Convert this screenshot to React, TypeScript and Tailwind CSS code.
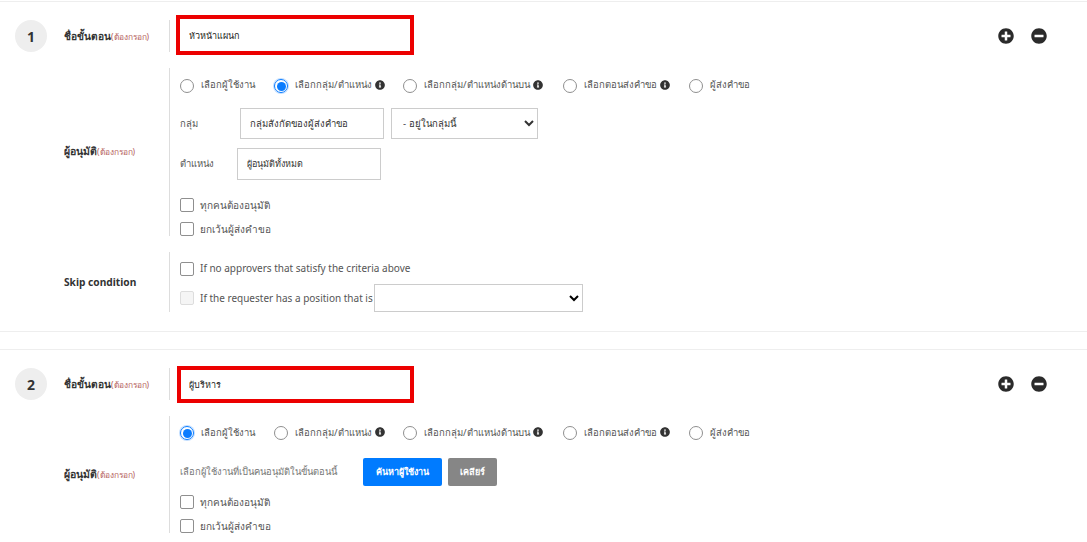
import React from 'react';
import { FaInfoCircle, FaMinusCircle, FaPlusCircle } from 'react-icons/fa';

const font = "font-['Noto_Sans','Open_Sans','DejaVu_Sans',sans-serif]";

function Required() {
    return <span className="text-[8.4px] font-normal text-[#b5605a]">(ต้องกรอก)</span>;
}

function Radio({ label, checked, info, width, lifted }: { label: string; checked?: boolean; info?: boolean; width: string; lifted?: boolean }) {
    return (
        <label className={`flex items-center ${width}`}>
            {checked ? (
                <span className="flex h-[14px] w-[14px] shrink-0 items-center justify-center rounded-full border border-[#0a7cff] shadow-[0_0_0_1px_rgba(10,124,255,0.25)]">
                    <span className="h-[9px] w-[9px] rounded-full bg-[#0a7cff]" />
                </span>
            ) : (
                <span className="h-[14px] w-[14px] shrink-0 rounded-full border border-[#8f8f8f]" />
            )}
            <span className={`ml-[7px] whitespace-nowrap text-[9.5px] text-[#555] ${lifted ? 'pb-px' : 'pt-px'}`}>{label}</span>
            {info && <FaInfoCircle className="mb-[2px] ml-[3px] shrink-0 text-[10px] text-[#333]" />}
        </label>
    );
}

function Check({ label, disabled, lifted }: { label: string; disabled?: boolean; lifted?: boolean }) {
    return (
        <label className="flex h-[14px] items-center">
            <span className={`h-[14px] w-[14px] shrink-0 rounded-[2px] border ${disabled ? 'border-[#ddd] bg-[#f5f5f5]' : 'border-[#8f8f8f]'}`} />
            <span className={`ml-[6px] whitespace-nowrap text-[10px] leading-[14px] text-[#555] ${lifted ? 'pb-[3px]' : 'pb-px'}`}>{label}</span>
        </label>
    );
}

function RadioRow({ first, height, lifted }: { first: number; height: string; lifted?: boolean }) {
    return (
        <div className={`flex items-center pl-[10px] ${height}`}>
            <Radio lifted={lifted} label="เลือกผู้ใช้งาน" checked={first === 0} width="w-[94px]" />
            <Radio lifted={lifted} label="เลือกกลุ่ม/ตำแหน่ง" checked={first === 1} info width="w-[129px]" />
            <Radio lifted={lifted} label="เลือกกลุ่ม/ตำแหน่งด้านบน" info width="w-[160px]" />
            <Radio lifted={lifted} label="เลือกตอนส่งคำขอ" info width="w-[126px]" />
            <Radio lifted={lifted} label="ผู้ส่งคำขอ" width="w-[80px]" />
        </div>
    );
}

function StepHeader({ no, name, boxClass }: { no: number; name: string; boxClass: string }) {
    return (
        <div className="flex h-[32px] items-center">
            <div className="ml-[15px] flex h-[32px] w-[32px] items-center justify-center rounded-full bg-[#eeeeee] text-[14px] font-bold text-[#333]">
                {no}
            </div>
            <div className="ml-[17px] w-[105px] pt-px text-[10.2px] font-bold text-[#333]">
                ชื่อขั้นตอน<Required />
            </div>
            <div className="h-[32px] border-l border-[#ddd] pl-[6px]">
                <input
                    readOnly
                    value={name}
                    className={`block border-4 border-[#ec0000] bg-white text-[9px] text-[#222] outline-none ${boxClass}`}
                />
            </div>
            <div className="ml-auto mr-[40px] flex gap-[17px] text-[16px] text-[#2b2b2b]">
                <FaPlusCircle />
                <FaMinusCircle />
            </div>
        </div>
    );
}

export default function App() {
    return (
        <div className={`h-[542px] w-[1087px] overflow-hidden bg-white ${font}`}>
            {/* Step 1 */}
            <section className="mt-px border-t border-[#eeeeee] pt-[18px]">
                <StepHeader no={1} name="หัวหน้าแผนก" boxClass="-mt-[5px] h-[40px] w-[238px] px-[9px] pt-[2px]" />

                <div className="mt-[16px] flex">
                    <div className="flex w-[169px] items-center pl-[64px] text-[10.5px] font-bold text-[#333]">
                        <span>ผู้อนุมัติ<Required /></span>
                    </div>
                    <div className="h-[168px] border-l border-[#ddd]">
                        <RadioRow first={1} height="h-[36px]" lifted />
                        <div className="mt-[4px] flex h-[31px] items-center pl-[10px]">
                            <span className="w-[60px] pt-[2px] text-[9.5px] text-[#555]">กลุ่ม</span>
                            <input readOnly value="กลุ่มสังกัดของผู้ส่งคำขอ" className="h-[31px] w-[144px] border border-[#ccc] px-[9px] text-[9.5px] text-[#333] outline-none" />
                            <select className="ml-[7px] h-[31px] w-[147px] border border-[#ccc] bg-white px-[7px] text-[9.5px] text-[#333] outline-none">
                                <option>- อยู่ในกลุ่มนี้</option>
                            </select>
                        </div>
                        <div className="mt-[9px] flex h-[32px] items-center pl-[10px]">
                            <span className="w-[57px] pt-px text-[9.5px] text-[#555]">ตำแหน่ง</span>
                            <input readOnly value="ผู้อนุมัติทั้งหมด" className="h-[32px] w-[144px] border border-[#ccc] px-[9px] text-[9px] text-[#333] outline-none" />
                        </div>
                        <div className="mt-[18px] flex flex-col gap-[10px] pl-[10px]">
                            <Check label="ทุกคนต้องอนุมัติ" />
                            <Check label="ยกเว้นผู้ส่งคำขอ" />
                        </div>
                    </div>
                </div>

                <div className="mt-[16px] flex">
                    <div className="flex w-[169px] items-center pl-[64px] pt-[2px] text-[10.2px] font-bold text-[#333]">Skip condition</div>
                    <div className="h-[60px] border-l border-[#ddd] pl-[10px]">
                        <div className="pt-[10px]">
                            <Check lifted label="If no approvers that satisfy the criteria above" />
                        </div>
                        <div className="mt-[8px] flex items-center">
                            <Check disabled label="If the requester has a position that is" />
                            <select className="ml-px h-[28px] w-[209px] border border-[#ccc] bg-white outline-none" />
                        </div>
                    </div>
                </div>
            </section>

            <div className="mt-[19px] h-[18px] border-t border-[#eeeeee]" />

            {/* Step 2 */}
            <section className="border-t border-[#eeeeee] pt-[18px]">
                <StepHeader no={2} name="ผู้บริหาร" boxClass="-mt-[2px] ml-px h-[37px] w-[237px] px-[8px]" />

                <div className="mt-[16px] flex">
                    <div className="flex w-[169px] items-center pl-[64px] text-[10.5px] font-bold text-[#333]">
                        <span>ผู้อนุมัติ<Required /></span>
                    </div>
                    <div className="h-[117px] border-l border-[#ddd]">
                        <RadioRow first={0} height="h-[34px]" />
                        <div className="mt-[8px] flex h-[28px] items-center pl-[10px]">
                            <span className="w-[183px] whitespace-nowrap text-[9.4px] text-[#777]">เลือกผู้ใช้งานที่เป็นคนอนุมัติในขั้นตอนนี้</span>
                            <button className="h-[28px] w-[79px] rounded-[2px] bg-[#007bff] text-[9px] font-bold text-white">ค้นหาผู้ใช้งาน</button>
                            <button className="ml-[6px] h-[28px] w-[49px] rounded-[2px] bg-[#868686] text-[9px] font-bold text-white">เคลียร์</button>
                        </div>
                        <div className="mt-[9px] flex flex-col gap-[10px] pl-[10px]">
                            <Check label="ทุกคนต้องอนุมัติ" />
                            <Check label="ยกเว้นผู้ส่งคำขอ" />
                        </div>
                    </div>
                </div>
            </section>
        </div>
    );
}
